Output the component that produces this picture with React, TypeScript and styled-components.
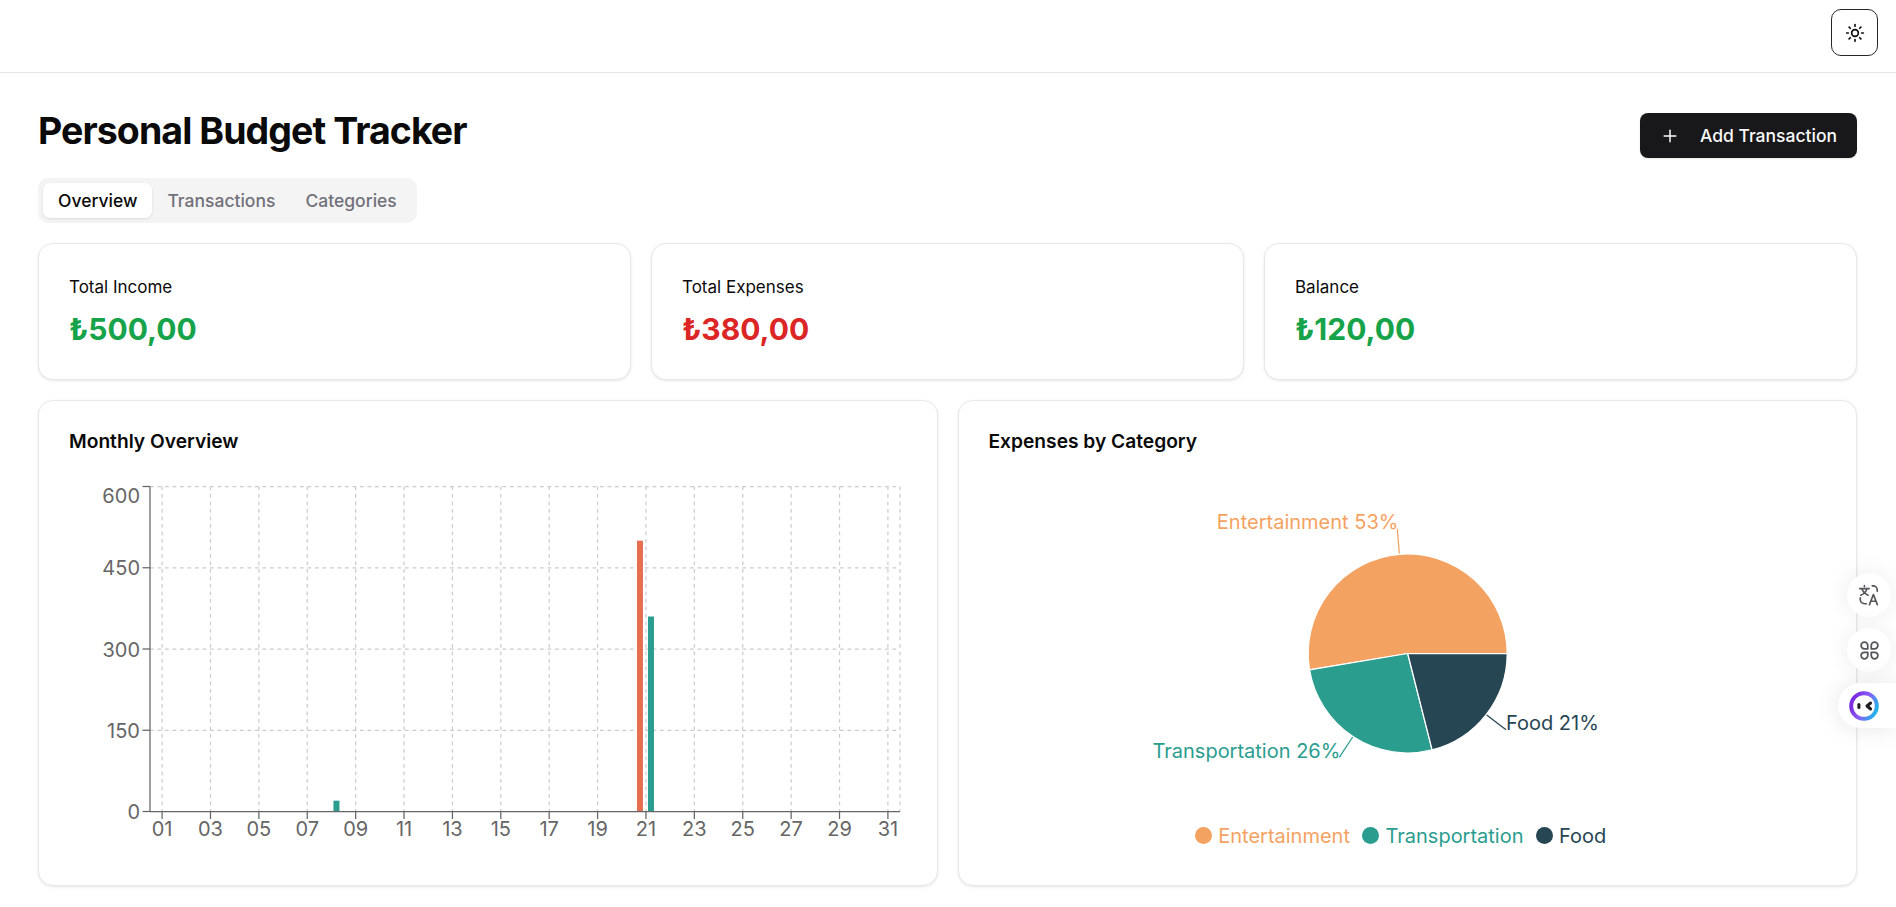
import React from "react";
import styled, { createGlobalStyle } from "styled-components";
import { Plus, Sun } from "lucide-react";

const GlobalStyle = createGlobalStyle`
  * {
    box-sizing: border-box;
  }
  html,
  body {
    margin: 0;
    height: 100%;
    overflow: hidden;
    background: #fff;
    color: #0a0a0a;
    font-family: Inter, "Noto Sans", sans-serif;
  }
`;

const Header = styled.header`
  display: flex;
  justify-content: flex-end;
  align-items: flex-start;
  height: 73px;
  padding: 9px 18px 0 0;
  border-bottom: 1px solid #e5e5e5;
`;

const ThemeButton = styled.button`
  display: flex;
  align-items: center;
  justify-content: center;
  width: 47px;
  height: 47px;
  padding: 0;
  background: #fff;
  border: 1.25px solid #27272a;
  border-radius: 10px;
  color: #0a0a0a;
`;

const Main = styled.main`
  padding: 40px 39px 0 38px;
`;

const TitleRow = styled.div`
  display: flex;
  justify-content: space-between;
  align-items: flex-start;
  height: 45px;
  margin-bottom: 20px;
`;

const Title = styled.h1`
  margin: 0;
  font-size: 37.5px;
  line-height: 35px;
  font-weight: 700;
  letter-spacing: -0.94px;
`;

const AddButton = styled.button`
  display: flex;
  align-items: center;
  gap: 20px;
  height: 45px;
  padding: 0 20px;
  background: #18181b;
  border: 0;
  border-radius: 8px;
  color: #fafafa;
  font: 500 17.5px Inter, sans-serif;
  box-shadow: 0 1px 2px rgba(0, 0, 0, 0.1);
`;

const TabList = styled.div`
  display: flex;
  width: fit-content;
  align-items: center;
  height: 45px;
  padding: 0 5px;
  background: #f4f4f5;
  border-radius: 10px;
  margin-bottom: 20px;
`;

const Tab = styled.div<{ $active?: boolean }>`
  height: 35px;
  padding: 0 15px;
  display: flex;
  align-items: center;
  font-size: 17.5px;
  font-weight: 500;
  border-radius: 7px;
  color: ${(p) => (p.$active ? "#0a0a0a" : "#71717a")};
  background: ${(p) => (p.$active ? "#fff" : "transparent")};
  box-shadow: ${(p) => (p.$active ? "0 1px 3px rgba(0,0,0,.1)" : "none")};
`;

const StatGrid = styled.div`
  display: grid;
  grid-template-columns: repeat(3, minmax(0, 1fr));
  gap: 20px;
  margin-bottom: 20px;
`;

const Card = styled.section`
  background: #fff;
  border: 1.25px solid #e8e8e8;
  border-radius: 15px;
  box-shadow: 0 1px 3px rgba(0, 0, 0, 0.1);
`;

const StatCard = styled(Card)`
  height: 137px;
  padding: 31px 30px;
`;

const StatLabel = styled.div`
  font-size: 17px;
  line-height: 24px;
  font-weight: 400;
`;

const StatValue = styled.div<{ $color: string }>`
  margin-top: 9.5px;
  font-size: 30px;
  line-height: 40px;
  font-weight: 700;
  color: ${(p) => p.$color};
`;

const ChartGrid = styled.div`
  display: grid;
  grid-template-columns: repeat(2, minmax(0, 1fr));
  gap: 20px;
`;

const ChartCard = styled(Card)`
  height: 486px;
  padding: 27px 0 0 30px;
`;

const ChartTitle = styled.h3`
  margin: 0 0 1px;
  font-size: 19.2px;
  line-height: 26px;
  font-weight: 600;
`;

const ChartSvg = styled.svg`
  display: block;
  font-family: Inter, sans-serif;
`;

const Legend = styled.ul`
  display: flex;
  justify-content: center;
  gap: 12.5px;
  margin: 0;
  padding: 0 43px 0 0;
  list-style: none;
`;

const LegendItem = styled.li<{ $color: string }>`
  display: flex;
  align-items: center;
  gap: 6px;
  font-size: 20px;
  line-height: 24px;
  color: ${(p) => p.$color};
`;

const LegendDot = styled.span<{ $color: string }>`
  width: 17px;
  height: 17px;
  border-radius: 50%;
  background: ${(p) => p.$color};
`;

const FloatDock = styled.div`
  position: fixed;
  right: 0;
  top: 573px;
  display: flex;
  flex-direction: column;
  align-items: flex-end;
  gap: 11px;
`;

const FloatButton = styled.div`
  display: flex;
  align-items: center;
  justify-content: center;
  width: 44px;
  height: 44px;
  margin-right: 5px;
  border-radius: 50%;
  background: #fff;
  color: #55555c;
  box-shadow: 0 0 24px rgba(0, 0, 0, 0.08);
`;

const FloatPill = styled.div`
  display: flex;
  align-items: center;
  width: 58px;
  height: 45px;
  padding-left: 11px;
  border-radius: 23px 0 0 23px;
  background: #fff;
  box-shadow: 0 0 24px rgba(0, 0, 0, 0.1);
`;

const days = Array.from({ length: 16 }, (_, i) => String(i * 2 + 1).padStart(2, "0"));
const yTicks = [600, 450, 300, 150, 0];

// chart box in svg coordinates
const X0 = 81;
const X1 = 831;
const Y0 = 31.5;
const Y1 = 356.5;
const band = (X1 - X0) / 31;
const yOf = (v: number) => Y1 - (v / 600) * (Y1 - Y0);
const xOf = (day: number) => X0 + (day - 0.5) * band;

const MonthlyChart = () => (
  <ChartSvg width={860} height={420}>
    <g stroke="#ccc" strokeWidth={1.25} strokeDasharray="3.75 3.75">
      {yTicks.slice(0, 4).map((t) => (
        <line key={t} x1={X0} x2={X1} y1={yOf(t)} y2={yOf(t)} />
      ))}
      {days.map((d) => (
        <line key={d} x1={xOf(+d)} x2={xOf(+d)} y1={Y0} y2={Y1} />
      ))}
      <line x1={X1} x2={X1} y1={Y0} y2={Y1} />
    </g>
    <rect x={xOf(8) + 2} y={yOf(20)} width={6} height={Y1 - yOf(20)} fill="#2a9d8f" />
    <rect x={xOf(21) - 9} y={yOf(500)} width={6} height={Y1 - yOf(500)} fill="#e76f51" />
    <rect x={xOf(21) + 2} y={yOf(360)} width={6} height={Y1 - yOf(360)} fill="#2a9d8f" />
    <g stroke="#666" strokeWidth={1.25}>
      <line x1={X0} x2={X0} y1={Y0} y2={Y1} />
      <line x1={X0} x2={X1} y1={Y1} y2={Y1} />
      {yTicks.map((t) => (
        <line key={t} x1={X0 - 7.5} x2={X0} y1={yOf(t)} y2={yOf(t)} />
      ))}
      {days.map((d) => (
        <line key={d} x1={xOf(+d)} x2={xOf(+d)} y1={Y1} y2={Y1 + 7.5} />
      ))}
    </g>
    <g fill="#666" fontSize={20}>
      {yTicks.map((t) => (
        <text key={t} x={X0 - 10} y={t === 600 ? yOf(t) + 16 : yOf(t) + 7.5} textAnchor="end">
          {t}
        </text>
      ))}
      {days.map((d) => (
        <text key={d} x={xOf(+d)} y={Y1 + 24} textAnchor="middle">
          {d}
        </text>
      ))}
    </g>
  </ChartSvg>
);

const slices = [
  { name: "Entertainment", value: 200, color: "#f4a261" },
  { name: "Transportation", value: 100, color: "#2a9d8f" },
  { name: "Food", value: 80, color: "#264653" },
];

const PX = 418.7;
const PY = 198.5;
const PR = 99.5;

const polar = (deg: number, r = PR): [number, number] => [
  PX + r * Math.cos((deg * Math.PI) / 180),
  PY - r * Math.sin((deg * Math.PI) / 180),
];

const slicePath = (from: number, to: number) => {
  const [ax, ay] = polar(from);
  const [bx, by] = polar(to);
  const large = to - from > 180 ? 1 : 0;
  return `M${PX},${PY} L${ax},${ay} A${PR},${PR} 0 ${large} 0 ${bx},${by} Z`;
};

const PieChart = () => {
  let angle = 0;
  return (
    <ChartSvg width={860} height={368.5}>
      {slices.map((s) => {
        const from = angle;
        angle += (s.value / 380) * 360;
        return <path key={s.name} d={slicePath(from, angle)} fill={s.color} stroke="#fff" strokeWidth={1.25} />;
      })}
      <g fill="none" strokeWidth={1.25}>
        <polyline points="410.3,98.5 408.3,73.8" stroke="#f4a261" />
        <polyline points="363.7,282 350.3,302.4" stroke="#2a9d8f" />
        <polyline points="497.7,260 517,274.7" stroke="#264653" />
      </g>
      <g fontSize={20}>
        <text x={409.4} y={73.5} textAnchor="end" fill="#f4a261">
          Entertainment 53%
        </text>
        <text x={351.4} y={303} textAnchor="end" fill="#2a9d8f">
          Transportation 26%
        </text>
        <text x={517} y={274.5} fill="#264653">
          Food 21%
        </text>
      </g>
    </ChartSvg>
  );
};

const TranslateIcon = () => (
  <svg width="22" height="22" viewBox="0 0 24 24" fill="none" stroke="currentColor" strokeWidth="1.8" strokeLinecap="round" strokeLinejoin="round">
    <path d="M7 1.6V2.8M1.8 5h10.4M9.8 5c-.7 3-2.9 5.6-6.8 7.2M4.2 5c.8 3 2.9 5.6 6.8 7.2" />
    <path d="M15.5 2h1a4.5 4.5 0 0 1 4.5 4.5V8" />
    <path d="M2.5 15v2a4.5 4.5 0 0 0 4.5 4.5h2" />
    <path d="M12.5 22.5l4.3-11 4.3 11M14 18.8h5.6" />
  </svg>
);

const CloverIcon = () => (
  <svg width="21" height="21" viewBox="0 0 24 24" fill="none" stroke="currentColor" strokeWidth="2" strokeLinejoin="round">
    <path d="M10 10H6.2a3.8 3.8 0 1 1 3.8-3.8Z" />
    <path d="M14 10h3.8a3.8 3.8 0 1 0-3.8-3.8Z" />
    <path d="M10 14H6.2a3.8 3.8 0 1 0 3.8 3.8Z" />
    <path d="M14 14h3.8a3.8 3.8 0 1 1-3.8 3.8Z" />
  </svg>
);

const BotLogo = () => (
  <svg width="30" height="30" viewBox="0 0 30 30">
    <defs>
      <linearGradient id="ring" x1="0.1" y1="0.3" x2="1" y2="0.7">
        <stop offset="0" stopColor="#7c2fe0" />
        <stop offset="0.45" stopColor="#8b5cf6" />
        <stop offset="1" stopColor="#1fb6e8" />
      </linearGradient>
    </defs>
    <circle cx="15" cy="15" r="12.8" fill="#fff" stroke="url(#ring)" strokeWidth="4" />
    <rect x="8.4" y="12" width="3" height="6" rx="1.5" fill="#1c1c22" />
    <path d="M21.6 12 L18 15 L21.6 18" fill="none" stroke="#1c1c22" strokeWidth="3" strokeLinecap="round" strokeLinejoin="round" />
  </svg>
);

export default function App() {
  return (
    <>
      <GlobalStyle />
      <Header>
        <ThemeButton>
          <Sun size={20} strokeWidth={2} />
        </ThemeButton>
      </Header>
      <Main>
        <TitleRow>
          <Title>Personal Budget Tracker</Title>
          <AddButton>
            <Plus size={20} strokeWidth={1.8} />
            Add Transaction
          </AddButton>
        </TitleRow>
        <TabList>
          <Tab $active>Overview</Tab>
          <Tab>Transactions</Tab>
          <Tab>Categories</Tab>
        </TabList>
        <StatGrid>
          <StatCard>
            <StatLabel>Total Income</StatLabel>
            <StatValue $color="#16a34a">₺500,00</StatValue>
          </StatCard>
          <StatCard>
            <StatLabel>Total Expenses</StatLabel>
            <StatValue $color="#dc2626">₺380,00</StatValue>
          </StatCard>
          <StatCard>
            <StatLabel>Balance</StatLabel>
            <StatValue $color="#16a34a">₺120,00</StatValue>
          </StatCard>
        </StatGrid>
        <ChartGrid>
          <ChartCard>
            <ChartTitle>Monthly Overview</ChartTitle>
            <MonthlyChart />
          </ChartCard>
          <ChartCard>
            <ChartTitle>Expenses by Category</ChartTitle>
            <PieChart />
            <Legend>
              {slices.map((s) => (
                <LegendItem key={s.name} $color={s.color}>
                  <LegendDot $color={s.color} />
                  {s.name}
                </LegendItem>
              ))}
            </Legend>
          </ChartCard>
        </ChartGrid>
      </Main>
      <FloatDock>
        <FloatButton>
          <TranslateIcon />
        </FloatButton>
        <FloatButton>
          <CloverIcon />
        </FloatButton>
        <FloatPill>
          <BotLogo />
        </FloatPill>
      </FloatDock>
    </>
  );
}
